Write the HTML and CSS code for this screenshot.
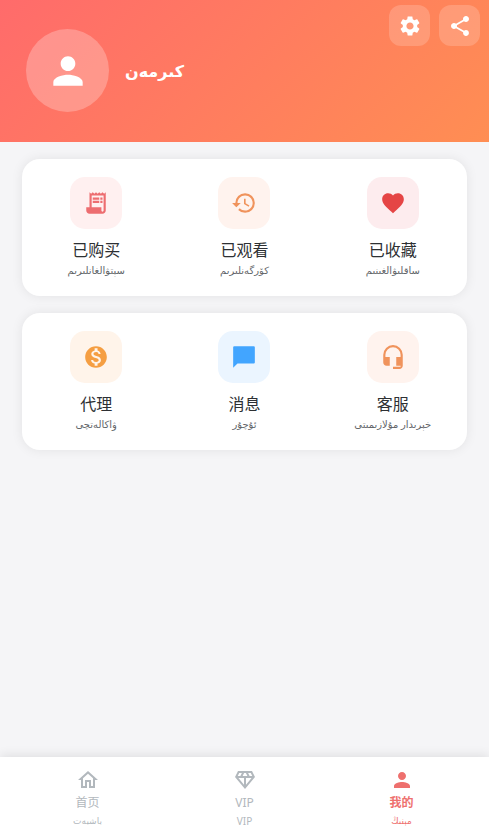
FILE: index.html
```html
<!DOCTYPE html>
<html lang="ug">
<head>
<meta charset="utf-8">
<meta name="viewport" content="width=device-width, initial-scale=1">
<title>我的</title>
<link rel="stylesheet" href="styles.css">
</head>
<body>
<header class="hero">
  <div class="profile">
    <button class="avatar" type="button" aria-label="كىرمەن"><svg viewBox="0 0 24 24"><path d="M12 12c2.21 0 4-1.79 4-4s-1.79-4-4-4-4 1.79-4 4 1.79 4 4 4zm0 2c-2.67 0-8 1.34-8 4v2h16v-2c0-2.66-5.33-4-8-4z"/></svg></button>
    <h1 class="login" dir="rtl">كىرمەن</h1>
  </div>
  <div class="actions">
    <button class="action" type="button" aria-label="设置"><svg viewBox="0 0 24 24"><path d="M19.14 12.94c.04-.3.06-.61.06-.94 0-.32-.02-.64-.07-.94l2.03-1.58c.18-.14.23-.41.12-.61l-1.92-3.32c-.12-.22-.37-.29-.59-.22l-2.39.96c-.5-.38-1.03-.7-1.62-.94l-.36-2.54c-.04-.24-.24-.41-.48-.41h-3.84c-.24 0-.43.17-.47.41l-.36 2.54c-.59.24-1.13.57-1.62.94l-2.39-.96c-.22-.08-.47 0-.59.22L2.74 8.87c-.12.21-.08.47.12.61l2.03 1.58c-.05.3-.09.63-.09.94s.02.64.07.94l-2.03 1.58c-.18.14-.23.41-.12.61l1.92 3.32c.12.22.37.29.59.22l2.39-.96c.5.38 1.03.7 1.62.94l.36 2.54c.05.24.24.41.48.41h3.84c.24 0 .44-.17.47-.41l.36-2.54c.59-.24 1.13-.56 1.62-.94l2.39.96c.22.08.47 0 .59-.22l1.92-3.32c.12-.22.07-.47-.12-.61l-2.01-1.58zM12 15.6c-1.98 0-3.6-1.62-3.6-3.6s1.62-3.6 3.6-3.6 3.6 1.62 3.6 3.6-1.62 3.6-3.6 3.6z"/></svg></button>
    <button class="action" type="button" aria-label="分享"><svg viewBox="0 0 24 24"><path d="M18 16.08c-.76 0-1.44.3-1.96.77L8.91 12.7c.05-.23.09-.46.09-.7s-.04-.47-.09-.7l7.05-4.11c.54.5 1.25.81 2.04.81 1.66 0 3-1.34 3-3s-1.34-3-3-3-3 1.34-3 3c0 .24.04.47.09.7L8.04 9.81C7.5 9.31 6.79 9 6 9c-1.66 0-3 1.34-3 3s1.34 3 3 3c.79 0 1.5-.31 2.04-.81l7.12 4.16c-.05.21-.08.43-.08.65 0 1.61 1.31 2.92 2.92 2.92s2.92-1.31 2.92-2.92-1.31-2.92-2.92-2.92z"/></svg></button>
  </div>
</header>
<main class="content">
  <section class="card">
    <a class="item" href="#purchased">
      <span class="tile tile-red"><svg viewBox="0 0 24 24"><path d="M19.5 3.5 18 2l-1.5 1.5L15 2l-1.5 1.5L12 2l-1.5 1.5L9 2 7.5 3.5 6 2v14H3v3c0 1.66 1.34 3 3 3h12c1.66 0 3-1.34 3-3V2l-1.5 1.5zM19 19c0 .55-.45 1-1 1s-1-.45-1-1v-3H8V5h11v14zM9 7h6v2H9zM16 7h2v2h-2zM9 10h6v2H9zM16 10h2v2h-2z"/></svg></span>
      <span class="title">已购买</span><span class="sub" dir="rtl">سېتۋالغانلىرىم</span>
    </a>
    <a class="item" href="#watched">
      <span class="tile tile-coral"><svg viewBox="0 0 24 24"><path d="M13 3a9 9 0 0 0-9 9H1l3.89 3.89.07.14L9 12H6c0-3.87 3.13-7 7-7s7 3.13 7 7-3.13 7-7 7c-1.93 0-3.68-.79-4.94-2.06l-1.42 1.42A8.954 8.954 0 0 0 13 21a9 9 0 0 0 0-18zm-1 5v5l4.28 2.54.72-1.21-3.5-2.08V8H12z"/></svg></span>
      <span class="title">已观看</span><span class="sub" dir="rtl">كۆرگەنلىرىم</span>
    </a>
    <a class="item" href="#favorites">
      <span class="tile tile-heart"><svg viewBox="0 0 24 24"><path d="m12 21.35-1.45-1.32C5.4 15.36 2 12.28 2 8.5 2 5.42 4.42 3 7.5 3c1.74 0 3.41.81 4.5 2.09C13.09 3.81 14.76 3 16.5 3 19.58 3 22 5.42 22 8.5c0 3.78-3.4 6.86-8.55 11.54L12 21.35z"/></svg></span>
      <span class="title">已收藏</span><span class="sub" dir="rtl">ساقلىۋالغىنىم</span>
    </a>
  </section>
  <section class="card">
    <a class="item" href="#agent">
      <span class="tile tile-amber"><svg viewBox="0 0 24 24"><path d="M12 2C6.48 2 2 6.48 2 12s4.48 10 10 10 10-4.48 10-10S17.52 2 12 2zm1.41 16.09V20h-2.67v-1.93c-1.71-.36-3.16-1.46-3.27-3.4h1.96c.1 1.05.82 1.87 2.65 1.87 1.96 0 2.4-.98 2.4-1.59 0-.83-.44-1.61-2.67-2.14-2.48-.6-4.18-1.62-4.18-3.67 0-1.72 1.39-2.84 3.11-3.21V4h2.67v1.95c1.86.45 2.79 1.86 2.85 3.39H14.3c-.05-1.11-.64-1.87-2.22-1.87-1.5 0-2.4.68-2.4 1.64 0 .84.65 1.39 2.67 1.91s4.18 1.39 4.18 3.91c-.01 1.83-1.38 2.83-3.12 3.16z"/></svg></span>
      <span class="title">代理</span><span class="sub" dir="rtl">ۋاكالەتچى</span>
    </a>
    <a class="item" href="#messages">
      <span class="tile tile-blue"><svg viewBox="0 0 24 24"><path d="M21 2H3Q2 2 2 3v19l4-4h15q1 0 1-1V3q0-1-1-1z"/></svg></span>
      <span class="title">消息</span><span class="sub" dir="rtl">ئۇچۇر</span>
    </a>
    <a class="item" href="#service">
      <span class="tile tile-coral"><svg viewBox="0 0 24 24"><path d="M12 1a9 9 0 0 0-9 9v7c0 1.66 1.34 3 3 3h3v-8H5v-2a7 7 0 0 1 14 0v2h-4v8h4v1h-7v2h6c1.66 0 3-1.34 3-3V10a9 9 0 0 0-9-9z"/></svg></span>
      <span class="title">客服</span><span class="sub" dir="rtl">خېرىدار مۇلازىمىتى</span>
    </a>
  </section>
</main>
<nav class="tabs">
  <a class="tab" href="#home"><svg viewBox="0 0 24 24"><path d="M12 5.69l5 4.5V18h-2v-6H9v6H7v-7.81l5-4.5M12 3 2 12h3v8h6v-6h2v6h6v-8h3L12 3z"/></svg><span class="tab-title">首页</span><span class="tab-sub" dir="rtl">باشبەت</span></a>
  <a class="tab" href="#vip"><svg viewBox="0 0 24 24"><path d="M19 3H5L2 9l10 12L22 9l-3-6zM9.62 8l1.5-3h1.76l1.5 3H9.62zM11 10v6.68L5.44 10H11zm2 0h5.56L13 16.68V10zm6.26-2h-2.65l-1.5-3h2.65l1.5 3zM6.24 5h2.65l-1.5 3H4.74l1.5-3z"/></svg><span class="tab-title">VIP</span><span class="tab-sub">VIP</span></a>
  <a class="tab tab-active" href="#mine" aria-current="page"><svg viewBox="0 0 24 24"><path d="M12 12c2.21 0 4-1.79 4-4s-1.79-4-4-4-4 1.79-4 4 1.79 4 4 4zm0 2c-2.67 0-8 1.34-8 4v2h16v-2c0-2.66-5.33-4-8-4z"/></svg><span class="tab-title">我的</span><span class="tab-sub" dir="rtl">مېنىڭ</span></a>
</nav>
</body>
</html>
```
FILE: styles.css
```css
* { box-sizing: border-box; }
body {
  margin: 0;
  min-height: 100vh;
  display: flex;
  flex-direction: column;
  background: #f5f5f7;
  color: #2d3033;
  font-family: "Noto Sans", "Noto Sans CJK SC", "DejaVu Sans", sans-serif;
}
svg { display: block; width: 26px; height: 26px; fill: currentColor; }
a { color: inherit; text-decoration: none; }
button { border: 0; padding: 0; color: #fff; display: grid; place-items: center; }

.hero {
  display: flex;
  justify-content: space-between;
  align-items: flex-start;
  padding: 5px 9px 30px 26px;
  background: linear-gradient(135deg, #ff6b6b, #ff8e53);
  color: #fff;
}
.profile {
  display: flex;
  align-items: center;
  gap: 16px;
  padding-top: 24px;
}
.avatar {
  width: 83px;
  height: 83px;
  border-radius: 50%;
  background: rgba(255, 255, 255, 0.25);
}
.avatar svg { width: 44px; height: 44px; }
.login { margin: 0; font-size: 16px; line-height: 24px; }
.actions { display: flex; gap: 9px; }
.action {
  width: 41px;
  height: 41px;
  border-radius: 12px;
  background: rgba(255, 255, 255, 0.18);
}
.action svg { width: 24px; height: 24px; }

.content {
  flex: 1;
  padding: 17px 22px;
  display: flex;
  flex-direction: column;
  gap: 17px;
}
.card {
  display: grid;
  grid-template-columns: repeat(3, 1fr);
  padding: 18px 0;
  border-radius: 18px;
  background: #fff;
  box-shadow: 0 0 12px rgba(0, 0, 0, 0.08);
}
.item { display: flex; flex-direction: column; align-items: center; }
.tile {
  width: 52px;
  height: 52px;
  border-radius: 15px;
  display: grid;
  place-items: center;
}
.tile-red { color: #ed6d70; background: #fff0f0; }
.tile-coral { color: #f0935c; background: #fff3ee; }
.tile-heart { color: #e54545; background: #fdecee; }
.tile-amber { color: #f59e42; background: #fff4ea; }
.tile-blue { color: #42a5ff; background: #ebf5ff; }
.title { margin-top: 9px; font-size: 16px; line-height: 24px; }
.sub { font-size: 10px; line-height: 16px; color: #63666a; white-space: nowrap; }

.tabs {
  display: grid;
  grid-template-columns: repeat(3, 1fr);
  padding: 11px 9px 11px;
  background: #fff;
  color: #b2b8bd;
  box-shadow: 0 -2px 10px rgba(0, 0, 0, 0.09);
}
.tab { display: flex; flex-direction: column; align-items: center; }
.tab svg { width: 24px; height: 24px; }
.tab-title { font-size: 12px; line-height: 22px; }
.tab-sub { font-size: 10px; line-height: 14px; }
.tab-sub[dir="rtl"] { font-size: 9px; }
.tab-active { color: #ee706e; }
.tab-active svg { width: 26px; }
.tab-active .tab-title { font-weight: 700; }
```
